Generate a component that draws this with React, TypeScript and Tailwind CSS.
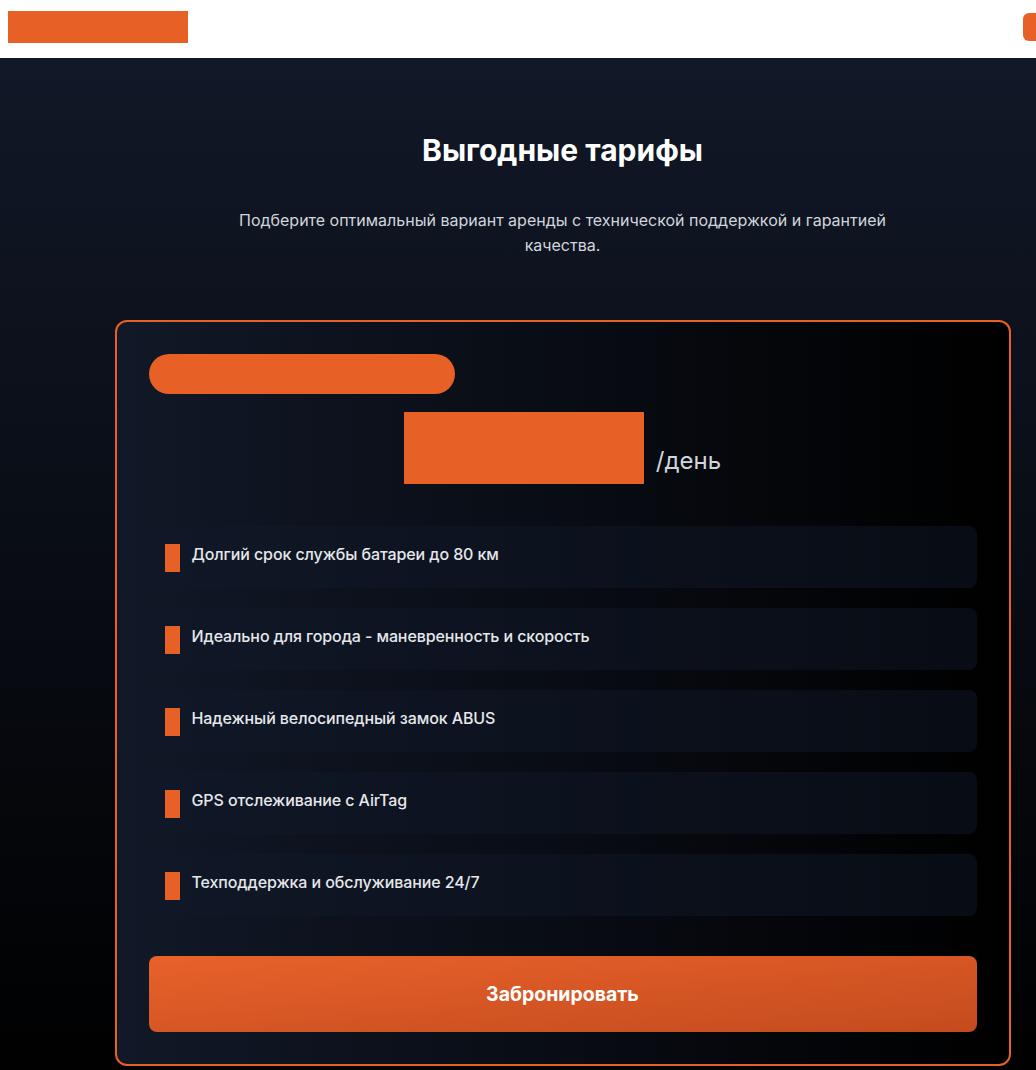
import React from 'react';

const features = [
  'Долгий срок службы батареи до 80 км',
  'Идеально для города - маневренность и скорость',
  'Надежный велосипедный замок ABUS',
  'GPS отслеживание с AirTag',
  'Техподдержка и обслуживание 24/7',
];

export default function App() {
  return (
    <div className="h-screen w-full overflow-hidden bg-black font-['Inter',sans-serif]">
      <div className="w-[1125px]">
        <header className="flex items-center justify-between bg-white px-2 pt-[11px] pb-[15px]">
          <div className="h-8 w-[180px] bg-[#e76026]" />
          <div className="h-7 w-[94px] rounded-md bg-[#e76026]" />
        </header>

        <section className="bg-[linear-gradient(to_bottom,#111827,#000000)] px-4 pt-[74px] pb-8">
          <h2 className="mb-10 text-center text-3xl font-bold text-white">Выгодные тарифы</h2>
          <p className="mx-auto mb-[62px] max-w-2xl text-center text-base leading-[25px] text-gray-300">
            Подберите оптимальный вариант аренды с технической поддержкой и гарантией качества.
          </p>

          <div className="mx-auto max-w-4xl rounded-xl border-2 border-[#e76026] bg-[linear-gradient(to_right,#111827,#000000)] p-8">
            <div className="mb-[18px] h-10 w-[306px] rounded-full bg-[#e76026]" />

            <div className="mb-[42px] flex items-end justify-center gap-3">
              <div className="h-[72px] w-[240px] bg-[#e76026]" />
              <span className="mb-[7px] text-2xl text-gray-300">/день</span>
            </div>

            <ul className="space-y-5">
              {features.map((f) => (
                <li key={f} className="flex h-[62px] items-start gap-3 rounded-lg bg-gray-900/50 p-4">
                  <span className="mt-0.5 h-7 w-[15px] shrink-0 bg-[#e76026]" />
                  <span className="text-base font-medium leading-6 tracking-[-0.1px] text-gray-200">{f}</span>
                </li>
              ))}
            </ul>

            <button className="mt-10 w-full rounded-lg bg-[linear-gradient(to_bottom_right,#e8622a,#c44b1f)] py-6 text-[19.5px] font-bold leading-7 text-white">
              Забронировать
            </button>
          </div>
        </section>
      </div>
    </div>
  );
}
